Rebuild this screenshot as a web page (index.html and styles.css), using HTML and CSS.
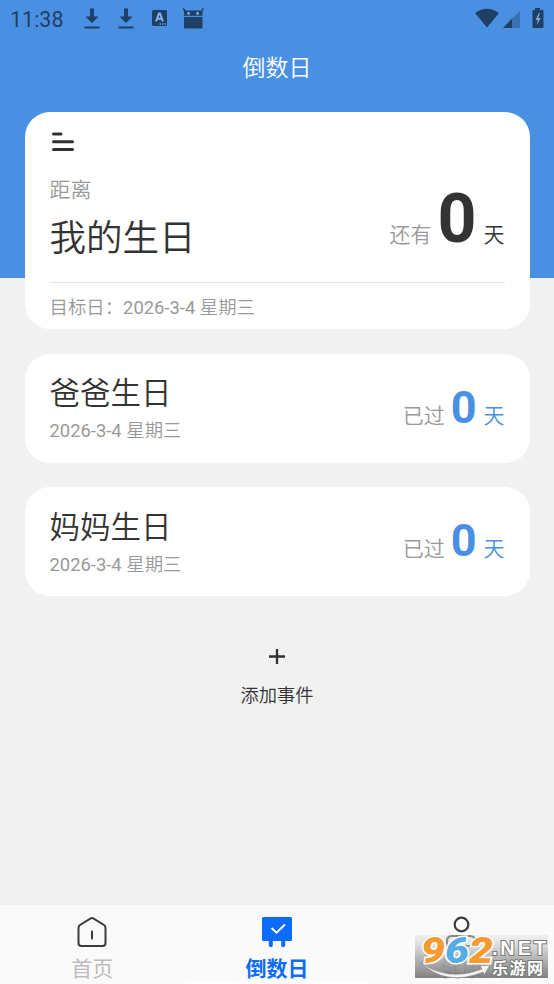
FILE: index.html
```html
<!DOCTYPE html>
<html lang="zh-CN">
<head>
<meta charset="utf-8">
<title>倒数日</title>
<link rel="stylesheet" href="styles.css">
</head>
<body>
<div class="app">
  <header class="top">
    <div class="status">
      <span class="time">11:38</span>
      <svg class="status-left" width="122" height="24" viewBox="0 0 122 24" fill="#203f64">
        <path id="down" d="M6 0.500h4v8h4.500L8 15 1.500 8.500H6zM.5 18.500h15v2H.5z"/>
        <use href="#down" x="34"/>
        <rect x="68" y="2" width="15" height="16" rx="1.500"/>
        <path d="M72 13.500 75 5.500h1l3 8M73 10.700h5" fill="none" stroke="#8ab6ec" stroke-width="1.900"/>
        <path d="M75.500 16h1.500m1 0h1.500m1 0h1.500" stroke="#689bd7" stroke-width="1.300"/>
        <path d="M98.500.3 100 3.200v4.600h18.500V3.200l1.500-2.900-1-.3-2 2.500h-15L99.500 0z"/>
        <path d="M100 9h18.500v10.200q0 1.300-1.300 1.300h-15.900q-1.300 0-1.300-1.300z"/>
        <circle cx="104.500" cy="5.300" r="1.500" fill="#79a8e1"/><circle cx="113.500" cy="5.300" r="1.500" fill="#79a8e1"/>
      </svg>
      <svg class="status-right" width="70" height="22" viewBox="0 0 70 22">
        <path d="M0 5Q11.700-3.500 24 5L12 19.500z" fill="#203f64"/>
        <path d="M28 20 45 2.500V20z" fill="#3b71b1"/>
        <path d="M28 20l9-9.300V20z" fill="#203f64"/>
        <path d="M60 0h5v2h2.500q1 0 1 1v16q0 1-1 1h-9q-1 0-1-1V3q0-1 1-1H60z" fill="#203f64"/>
        <path d="M63.800 5 60.500 12h2.300l-.8 5 3.700-7h-2.500l1.800-5z" fill="#79a8e1"/>
      </svg>
    </div>
    <h1 class="title">倒数日</h1>
  </header>

  <main class="content">
    <section class="card hero">
      <svg class="menu" width="22" height="20" viewBox="0 0 22 20" stroke="#303030" stroke-width="3" stroke-linecap="round">
        <path d="M1.500 2H9M1.500 9.700h19M1.500 17.500h19"/>
      </svg>
      <div class="hero-row">
        <div>
          <div class="label">距离</div>
          <div class="hero-name">我的生日</div>
        </div>
        <div class="count"><span class="muted">还有</span><b class="big">0</b><span class="unit">天</span></div>
      </div>
      <div class="target"><span class="zh">目标日：</span>2026-3-4 <span class="zh">星期三</span></div>
    </section>

    <section class="card event">
      <div>
        <div class="name">爸爸生日</div>
        <div class="date">2026-3-4 <span class="zh">星期三</span></div>
      </div>
      <div class="count blue"><span class="muted">已过</span><b class="small">0</b><span class="unit">天</span></div>
    </section>

    <section class="card event">
      <div>
        <div class="name">妈妈生日</div>
        <div class="date">2026-3-4 <span class="zh">星期三</span></div>
      </div>
      <div class="count blue"><span class="muted">已过</span><b class="small">0</b><span class="unit">天</span></div>
    </section>

    <div class="add">
      <svg width="16" height="16" viewBox="0 0 16 16" stroke="#303030" stroke-width="2.300"><path d="M0 8.500h16M8 1v15"/></svg>
      <span class="zh">添加事件</span>
    </div>
  </main>

  <nav class="tabs">
    <div class="tab">
      <svg width="32" height="34" viewBox="0 0 32 34" fill="none" stroke="#3b3b3b" stroke-width="2" stroke-linejoin="round">
        <path d="M14.700 3.300q1.300-.8 2.600 0l10.700 6.700q1.500 1 1.500 3V28q0 3-3 3h-21q-3 0-3-3V13q0-2 1.500-3z"/><path d="M16 16.500v7" stroke-linecap="round"/>
      </svg>
      <span>首页</span>
    </div>
    <div class="tab active">
      <svg width="32" height="34" viewBox="0 0 32 34">
        <path d="M2.500 2h27q1.500 0 1.500 1.500v21q0 1.500-1.500 1.500h-5.300v4.300a2 2 0 0 1-4 0V26h-8.400v4.300a2 2 0 0 1-4 0V26H2.500Q1 26 1 24.500v-21Q1 2 2.500 2z" fill="#0d6dfa"/>
        <path d="m10.500 13 5 4.700 8.500-8.200" fill="none" stroke="#fff" stroke-width="2"/>
      </svg>
      <span>倒数日</span>
    </div>
    <div class="tab">
      <svg width="32" height="34" viewBox="0 0 32 34" fill="none" stroke="#3b3b3b" stroke-width="2.200">
        <circle cx="15.500" cy="9.500" r="6.800"/><path d="M1 31v-5q0-5 5-5h18q5 0 5 5v5z"/>
      </svg>
      <span>健康</span>
    </div>
    <div class="handle"></div>
  </nav>

  <svg class="watermark" width="133" height="43" viewBox="0 0 133 43">
    <defs><linearGradient id="shade" x2="0" y2="1"><stop stop-color="#e4e4e4" stop-opacity=".45"/><stop offset=".5" stop-color="#a5a5a5" stop-opacity=".75"/><stop offset="1" stop-color="#6c6c6c" stop-opacity=".85"/></linearGradient></defs>
    <path d="M0 0h133v43H0z" fill="url(#shade)"/>
    <path d="M6 28q28 19 61 6l-2-3 10-1-6 10-1-3Q32 52 6 28z" fill="#f4f4f4" stroke="#777" stroke-width=".5"/>
    <g class="mark-num" stroke="#fff" stroke-width="3" paint-order="stroke">
      <text x="6" y="28" textLength="72" lengthAdjust="spacingAndGlyphs"><tspan fill="#f79a32">9</tspan><tspan fill="#55ade5">6</tspan><tspan fill="#f79a32">2</tspan></text>
    </g>
    <g fill="#fff" stroke="#777" stroke-width="2" paint-order="stroke">
      <text class="mark-net" x="77" y="20" textLength="54">.NET</text>
      <text class="mark-cn" x="77" y="39" textLength="51">乐游网</text>
    </g>
  </svg>
</div>
</body>
</html>
```
FILE: styles.css
```css
* { box-sizing: border-box; }
body {
  margin: 0;
  font-family: Roboto, "Noto Sans CJK SC", sans-serif;
  color: #333;
  background: #f1f1f1;
}
.app {
  position: relative;
  height: 984px;
  display: flex;
  flex-direction: column;
  overflow: hidden;
}
.top { height: 278px; flex: none; background: #4a90e2; }
.status { height: 38px; display: flex; align-items: flex-start; padding: 8px 10px 0; }
.time { width: 74px; font-size: 21.500px; line-height: 24px; color: #203f64; }
.status-right { margin-left: auto; margin-right: -1px; }
.title {
  margin: 14px 0 0;
  text-align: center;
  font-size: 23px;
  line-height: 34px;
  font-weight: 350;
  color: #fff;
}
.content {
  flex: 1;
  margin-top: -166px;
  padding: 0 24.500px;
  display: flex;
  flex-direction: column;
  gap: 24.700px;
}
.card { background: #fff; border-radius: 25px; padding: 0 25px; }
.hero { height: 217px; padding-top: 20px; }
.menu { display: block; margin-left: 2px; }
.hero-row {
  height: 131px;
  padding-top: 22px;
  display: flex;
  justify-content: space-between;
  border-bottom: 1px solid #e3e3e3;
}
.zh, .label, .muted, .unit, .name, .hero-name { font-weight: 350; }
.label { font-size: 21px; line-height: 32px; color: #999; }
.hero-name { font-size: 36.500px; line-height: 54px; margin-top: 6px; }
.count { display: flex; align-items: baseline; font-size: 21px; line-height: 32px; }
.muted { color: #999; }
.big { font-size: 68px; line-height: 80px; margin: 5px 7px 0 6px; }
.small { font-size: 45px; line-height: 52px; margin: -1px 7px 0 6px; }
.target { font-size: 18.400px; line-height: 30px; padding-top: 10px; color: #999; }
.event { height: 109px; display: flex; align-items: center; justify-content: space-between; }
.name { font-size: 30.500px; line-height: 44px; margin-top: 1px; }
.date { font-size: 18.400px; line-height: 28px; margin-top: 1px; color: #999; }
.blue { color: #4a90e2; }
.add {
  margin-top: 27px;
  display: flex;
  flex-direction: column;
  align-items: center;
  gap: 18px;
  font-size: 18.300px;
  line-height: 28px;
}
.tabs {
  position: relative;
  height: 79px;
  flex: none;
  display: grid;
  grid-template-columns: repeat(3, 1fr);
  background: #fafafa;
}
.tab {
  display: flex;
  flex-direction: column;
  align-items: center;
  padding-top: 10px;
  font-size: 21px;
  line-height: 30px;
  color: #bcbcbc;
}
.tab span { margin-top: 5px; }
.active { color: #0d6dfa; font-weight: 700; }
.handle { position: absolute; left: 185px; bottom: 0; width: 185px; height: 3px; background: #fff; }
.watermark { position: absolute; left: 415px; top: 935px; overflow: visible; }
.mark-num { font: italic 900 36px Roboto, sans-serif; }
.mark-net { font: 700 20px "Liberation Sans", sans-serif; }
.mark-cn { font: 700 16px "Noto Sans CJK SC", sans-serif; }
```
